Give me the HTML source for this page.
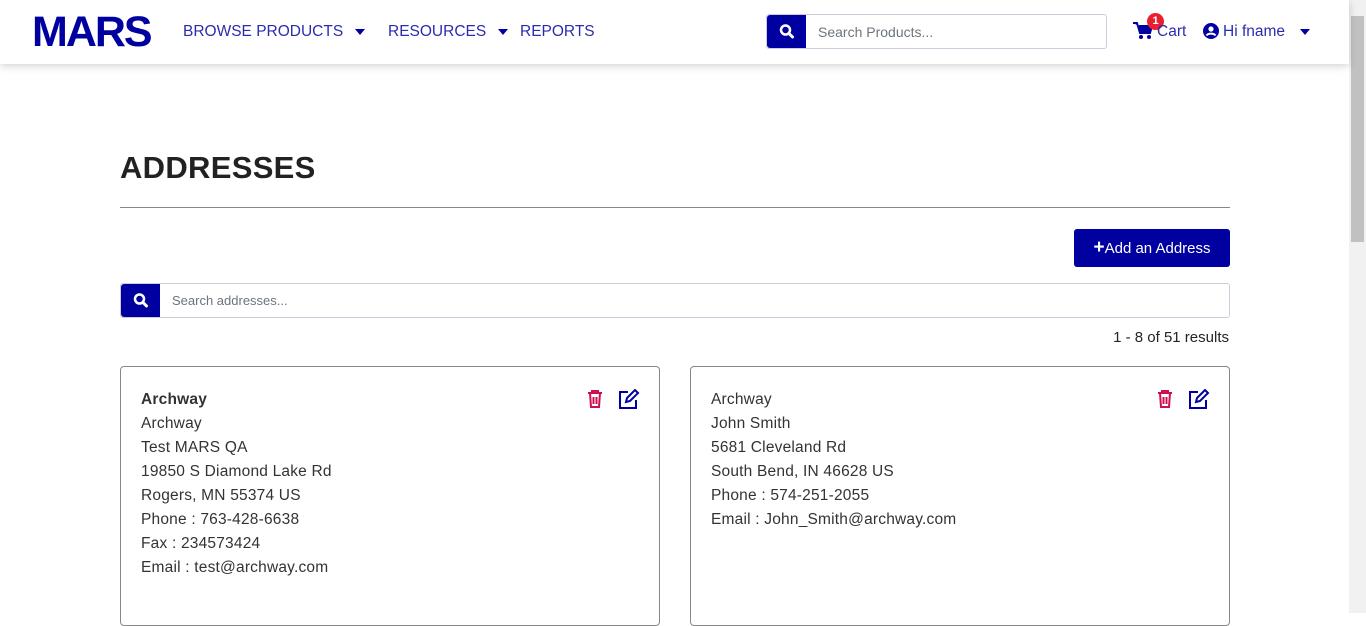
<!DOCTYPE html>
<html><head><style>
*{box-sizing:border-box;margin:0;padding:0}
body{width:1366px;height:613px;overflow:hidden;background:#fff;font-family:"Liberation Sans",sans-serif;color:#212529;position:relative}
.hdr{position:absolute;left:0;top:0;width:1349px;height:64px;background:#fff;box-shadow:0 2px 8px rgba(0,0,0,.18);z-index:2}
.logo{position:absolute;left:32px;top:10px;font-weight:900;font-size:43px;color:#0000a0;letter-spacing:-2px;line-height:44px;transform:scaleX(1.0);transform-origin:left}
.nav{position:absolute;top:22px;font-size:15.5px;color:#2b2bb0;line-height:20px}
.tri{display:inline-block;width:0;height:0;border-left:5px solid transparent;border-right:5px solid transparent;border-top:6px solid #0000a0;vertical-align:middle;margin-left:12px}
.sb{position:absolute;left:766px;top:14px;width:341px;height:35px;border:1px solid #ccd;border-radius:3px}
.sbtn{position:absolute;left:0;top:0;width:39px;height:100%;background:#0000a0;border-radius:3px 0 0 3px}
.ph{position:absolute;left:51px;top:9px;font-size:14px;color:#6c757d}
.scroll{position:absolute;left:1349px;top:0;width:17px;height:613px;background:#f1f1f1}
.thumb{position:absolute;left:1351px;top:16px;width:13px;height:226px;background:#c1c1c1}
h1{position:absolute;left:120px;top:150px;font-size:31px;font-weight:700;letter-spacing:0.3px;color:#222}
.hr{position:absolute;left:120px;top:207px;width:1110px;height:1px;background:#888}
.add{position:absolute;left:1074px;top:229px;width:156px;height:38px;background:#0000a0;color:#fff;border-radius:3px;font-size:15px;line-height:38px;text-align:center}
.as{position:absolute;left:120px;top:283px;width:1110px;height:35px;border:1px solid #ccd;border-radius:3px}
.res{position:absolute;right:137px;top:329px;font-size:15px}
.card{position:absolute;top:366px;width:540px;height:260px;border:1px solid #888;border-radius:4px;padding:21px 20px;font-size:15.5px;letter-spacing:0.2px;line-height:24px;color:#333}
.ic{position:absolute;top:22px}
</style></head><body>
<div class="hdr">
<div class="logo">MARS</div>
<div class="nav" style="left:183px">BROWSE PRODUCTS<span class="tri"></span></div>
<div class="nav" style="left:388px">RESOURCES<span class="tri"></span></div>
<div class="nav" style="left:520px">REPORTS</div>
<div class="sb"><div class="sbtn"><svg width="39" height="33" viewBox="0 0 39 33"><circle cx="18.5" cy="15" r="4.5" fill="none" stroke="#fff" stroke-width="2.5"/><path d="M22 18.5l3.5 3.5" stroke="#fff" stroke-width="3" stroke-linecap="round"/></svg></div><div class="ph">Search Products...</div></div>
<svg style="position:absolute;left:1133px;top:22px" width="20" height="18" viewBox="0 0 20 18"><path d="M0 1h4l3 10h10l2-7H6" fill="#0000a0" stroke="#0000a0" stroke-width="2"/><circle cx="8" cy="15" r="2" fill="#0000a0"/><circle cx="16" cy="15" r="2" fill="#0000a0"/></svg>
<div style="position:absolute;left:1147px;top:13px;width:17px;height:17px;border-radius:50%;background:#e8202e;color:#fff;font-size:11px;font-weight:700;text-align:center;line-height:17px">1</div>
<div class="nav" style="left:1157px">Cart</div>
<svg style="position:absolute;left:1203px;top:23px" width="16" height="16" viewBox="0 0 16 16"><circle cx="8" cy="8" r="8" fill="#0000a0"/><circle cx="8" cy="6" r="2.6" fill="#fff"/><path d="M3.5 12.5c1.5-2.5 7.5-2.5 9 0" stroke="#fff" stroke-width="2" fill="none"/></svg>
<div class="nav" style="left:1223px">Hi fname<span class="tri" style="margin-left:15px"></span></div>
</div>
<div class="scroll"></div><div class="thumb"></div>
<h1>ADDRESSES</h1>
<div class="hr"></div>
<div class="add"><b style="font-size:19px">+</b>Add an Address</div>
<div class="as"><div class="sbtn"><svg width="39" height="33" viewBox="0 0 39 33"><circle cx="18.5" cy="15" r="4.5" fill="none" stroke="#fff" stroke-width="2.5"/><path d="M22 18.5l3.5 3.5" stroke="#fff" stroke-width="3" stroke-linecap="round"/></svg></div><div class="ph" style="font-size:13px">Search addresses...</div></div>
<div class="res">1 - 8 of 51 results</div>
<div class="card" style="left:120px"><b>Archway</b><br>Archway<br>Test MARS QA<br>19850 S Diamond Lake Rd<br>Rogers, MN 55374 US<br>Phone : 763-428-6638<br>Fax : 234573424<br>Email : test@archway.com
<svg class="ic" style="left:466px" width="16" height="20" viewBox="0 0 16 20"><path d="M1 4h14M5 4V2h6v2M3 4l1 14h8l1-14M6.5 8v7M9.5 8v7" stroke="#d0104c" stroke-width="2" fill="none"/></svg>
<svg class="ic" style="left:497px" width="22" height="20" viewBox="0 0 22 20"><path d="M10 3H2v16h16v-8" stroke="#0000a0" stroke-width="2" fill="none"/><path d="M8 13l1-4 8-8 3 3-8 8z" stroke="#0000a0" stroke-width="2" fill="none"/></svg></div>
<div class="card" style="left:690px">Archway<br>John Smith<br>5681 Cleveland Rd<br>South Bend, IN 46628 US<br>Phone : 574-251-2055<br>Email : John_Smith@archway.com
<svg class="ic" style="left:466px" width="16" height="20" viewBox="0 0 16 20"><path d="M1 4h14M5 4V2h6v2M3 4l1 14h8l1-14M6.5 8v7M9.5 8v7" stroke="#d0104c" stroke-width="2" fill="none"/></svg>
<svg class="ic" style="left:497px" width="22" height="20" viewBox="0 0 22 20"><path d="M10 3H2v16h16v-8" stroke="#0000a0" stroke-width="2" fill="none"/><path d="M8 13l1-4 8-8 3 3-8 8z" stroke="#0000a0" stroke-width="2" fill="none"/></svg></div>
</body></html>
